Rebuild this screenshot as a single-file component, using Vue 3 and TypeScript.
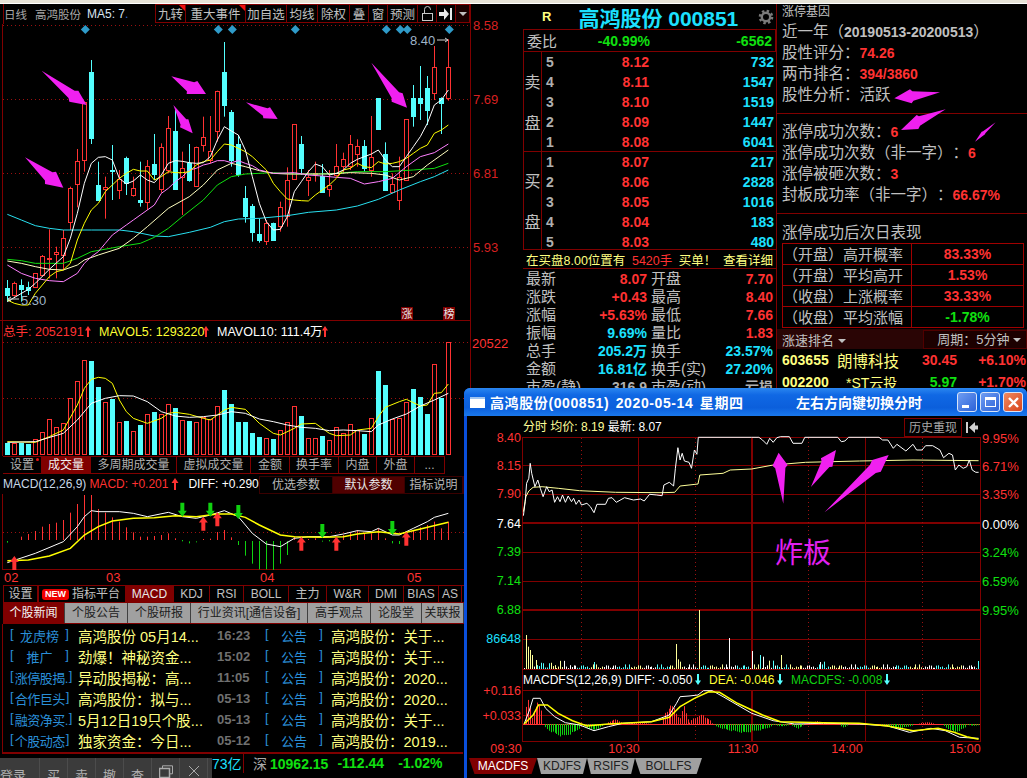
<script setup lang="ts">
type Candle = [number, number, number, number, number]

// kline coords are read at 3x off the daily chart, x comes from the index
const cx = (i: number) => Math.round((22 + 21 * i) / 3)
const line3 = (raw: number[], dy = 0) => {
  const out: string[] = []
  for (let i = 0; i < raw.length; i += 2) out.push(`${raw[i] / 3},${raw[i + 1] / 3 + dy}`)
  return out.join(' ')
}

// arrow is [tail, barb, tip, barb]; adds the two notches where the shaft meets the head
const withNotches = (p: number[]) => {
  const [tx, ty, ax, ay, hx, hy, bx, by] = p
  const mx = (ax + bx) / 2
  const my = (ay + by) / 2
  const notch = (x: number, y: number) => [
    x + (mx - x) * 0.32 + (tx - mx) * 0.07,
    y + (my - y) * 0.32 + (ty - my) * 0.07,
  ]
  return [tx, ty, ...notch(ax, ay), ax, ay, hx, hy, bx, by, ...notch(bx, by)]
}

const candleRaw: Candle[] = [
  [840, 865, 885, 905, 0], [845, 848, 885, 890, 1], [838, 855, 868, 905, 0], [845, 862, 870, 885, 0],
  [820, 820, 862, 862, 1], [765, 768, 825, 830, 1], [688, 775, 778, 835, 1], [740, 757, 763, 835, 1],
  [690, 715, 765, 810, 1], [560, 565, 668, 690, 1], [447, 482, 550, 622, 1], [305, 305, 478, 515, 1],
  [180, 217, 416, 432, 0], [485, 555, 600, 600, 0], [530, 560, 566, 656, 1], [435, 510, 512, 600, 0],
  [510, 538, 572, 597, 1], [470, 473, 547, 585, 0], [530, 565, 587, 590, 1], [485, 601, 606, 620, 0],
  [480, 497, 605, 630, 1], [402, 492, 522, 540, 0], [430, 442, 567, 578, 1], [348, 385, 510, 520, 1],
  [330, 393, 567, 567, 0], [455, 503, 530, 645, 1], [432, 488, 540, 545, 0], [440, 440, 557, 557, 1],
  [350, 410, 433, 455, 1], [348, 452, 480, 490, 1], [272, 274, 395, 425, 1], [126, 217, 315, 350, 0],
  [330, 337, 480, 500, 0], [405, 432, 522, 530, 0], [558, 595, 650, 668, 0], [612, 618, 695, 725, 0],
  [655, 702, 720, 728, 0], [660, 668, 722, 735, 1], [668, 670, 720, 722, 0], [605, 622, 678, 695, 1],
  [502, 540, 648, 680, 1], [373, 373, 538, 540, 1], [408, 433, 506, 525, 0], [510, 531, 541, 588, 1],
  [485, 520, 524, 545, 1], [492, 527, 575, 575, 0], [510, 556, 568, 590, 1], [432, 498, 525, 530, 1],
  [458, 478, 500, 520, 1], [405, 432, 497, 510, 1], [418, 438, 463, 500, 1], [420, 438, 503, 515, 0],
  [348, 472, 510, 530, 1], [295, 295, 387, 390, 0], [427, 462, 570, 570, 0], [520, 552, 575, 580, 1],
  [470, 530, 598, 630, 1], [358, 358, 540, 542, 1], [255, 295, 350, 380, 0], [198, 295, 311, 360, 0],
  [228, 265, 330, 375, 0], [138, 202, 280, 300, 1], [292, 294, 308, 402, 0], [118, 200, 292, 302, 1],
]
const candles = candleRaw.map((c, i) => ({
  x: cx(i),
  wt: c[0] / 3,
  top: Math.round(c[1] / 3),
  h: Math.max(1, Math.round((c[2] - c[1]) / 3)),
  wb: c[3] / 3,
  red: c[4] === 1,
}))

const maLines = [
  { color: '#28e0f0', pts: [22,643,64,660,106,677,148,685,190,690,274,690,358,690,400,695,463,708,505,710,568,697,631,682,673,665,715,657,778,655,862,647,925,637,1009,630,1072,618,1135,598,1198,570,1261,545,1303,530,1345,510] },
  { color: '#10e010', pts: [22,778,64,782,106,790,190,790,232,775,274,755,358,740,421,730,463,712,505,685,547,650,610,600,652,555,694,530,736,522,820,518,883,522,946,522,1009,520,1072,515,1156,515,1240,510,1303,505,1345,490] },
  { color: '#ffffc0', pts: [22,783,64,790,106,800,148,808,190,810,232,795,253,780,295,765,358,745,400,715,442,680,505,625,568,590,610,555,652,510,694,490,736,500,778,512,820,520,862,522,925,522,988,522,1051,518,1114,520,1156,525,1198,540,1240,530,1282,495,1345,450] },
  { color: '#ff80ff', pts: [22,795,64,820,106,835,148,842,190,845,232,820,253,790,274,770,295,755,316,730,337,705,358,690,379,675,400,660,442,630,463,615,484,580,505,565,526,545,547,530,568,510,589,505,610,495,631,490,652,482,673,482,694,488,715,482,736,490,757,497,778,510,799,515,820,520,883,518,925,525,967,528,1009,532,1051,535,1093,552,1135,545,1177,535,1219,500,1261,470,1303,458,1345,432] },
  { color: '#ffff00', pts: [22,900,43,910,64,915,85,915,106,880,127,855,148,830,169,815,190,810,211,790,232,720,253,670,274,630,295,610,316,575,337,555,358,535,379,520,400,508,421,513,442,513,463,540,484,530,505,515,526,518,547,518,568,515,589,495,610,485,631,480,652,455,673,432,694,435,715,445,736,455,757,470,778,490,799,510,820,550,841,575,862,597,883,600,904,602,925,603,946,585,967,570,988,555,1009,535,1030,510,1051,505,1072,490,1093,500,1114,503,1135,485,1156,492,1177,490,1198,485,1219,475,1240,460,1261,445,1282,435,1303,400,1324,390,1345,375] },
  { color: '#ffffff', pts: [22,905,85,868,106,850,148,808,190,770,211,715,232,640,253,550,274,490,295,472,316,470,337,480,358,535,379,552,400,543,421,525,442,540,463,548,484,525,505,490,526,482,547,484,568,488,589,490,610,488,631,470,652,420,673,380,694,393,715,405,736,450,757,530,778,610,799,665,820,690,841,688,862,650,883,575,904,545,925,515,946,492,967,500,988,525,1009,520,1030,510,1051,490,1072,478,1093,470,1114,462,1135,450,1156,480,1177,500,1198,500,1219,470,1240,440,1261,410,1282,370,1303,315,1324,300,1345,270] },
]

const klineArrows = [
  [75,472,168,515,190,563,135,552],
  [125,212,235,272,260,315,208,305],
  [514,229,592,243,618,282,560,282],
  [520,315,565,358,578,400,540,382],
  [738,307,810,322,833,357,790,355],
  [1114,188,1208,280,1221,323,1175,305],
].map((a) => line3(withNotches(a)))
const diamonds = [256, 655, 697, 886, 1159, 1201, 1222, 1348]

const volTops = [370,370,368,372,358,335,298,320,308,235,183,121,123,202,247,237,307,303,333,315,283,276,282,253,265,300,303,307,290,298,258,210,252,306,306,339,351,355,357,331,307,259,288,355,355,348,360,320,340,313,330,342,295,153,195,297,295,247,207,231,282,133,233,67]
const volBars = volTops.map((t, i) => {
  const top = Math.round(t / 3 + 320)
  return { x: cx(i), top, h: 454 - top, red: candleRaw[i][4] === 1 }
})
const volYellow = [22,365,106,367,148,350,190,330,232,255,253,205,274,178,295,172,316,175,337,190,358,240,379,275,400,295,442,310,484,295,505,280,526,277,568,283,610,295,631,300,673,270,694,262,736,268,778,310,820,340,841,345,883,325,904,312,946,310,988,340,1009,347,1051,345,1072,330,1114,325,1135,290,1156,262,1198,245,1219,238,1261,258,1282,255,1303,220,1324,218,1345,192]
const volWhite = [22,367,106,365,190,340,232,300,274,250,316,235,358,227,400,228,442,245,484,275,526,288,568,292,610,290,652,285,694,275,736,280,778,297,820,305,862,315,904,322,946,325,988,332,1030,330,1072,332,1114,335,1135,315,1177,297,1219,282,1261,258,1303,240,1345,220]

// histogram ends: top, bottom (3x, relative to the crop at y=320)
const macdHist: [number, number, number][] = [
  [22,663,668],[64,650,660],[85,642,660],[106,633,660],[127,620,660],[148,612,660],[169,608,660],[190,600,660],[211,578,660],[232,552,660],[253,525,660],[274,525,660],[295,567,660],[316,578,660],[337,592,660],[358,605,660],[379,622,660],[400,637,660],[421,650,660],[442,650,660],[463,648,660],[484,645,660],[505,640,660],[526,655,660],[547,660,664],[568,664,670],[589,664,667],[610,657,660],[631,656,660],[652,636,660],[673,630,660],[694,652,660],[715,663,675],[736,663,707],[757,663,731],[778,663,748],[799,663,748],[820,663,750],[841,663,731],[862,663,705],[883,650,660],[904,650,660],[925,657,660],[946,655,660],[967,662,665],[988,660,664],[1009,655,660],[1030,645,660],[1051,638,660],[1072,630,660],[1093,640,660],[1114,640,660],[1135,625,660],[1156,655,660],[1177,663,670],[1198,663,672],[1219,640,660],[1240,633,660],[1261,622,660],[1282,615,660],[1303,605,660],[1324,625,660],[1345,605,660],
]
const macdBars = macdHist.map(([x, a, b]) => ({
  x: Math.round(x / 3) + 0.5,
  y1: a / 3 + 320,
  y2: b / 3 + 320,
  green: a >= 660,
}))
const macdWhite = [22,728,106,700,190,665,232,620,253,590,274,572,295,575,358,575,400,580,442,590,505,577,547,590,589,595,631,585,673,572,715,590,757,640,799,672,841,680,883,655,925,650,988,650,1030,642,1072,632,1114,635,1135,625,1177,645,1198,645,1240,625,1282,605,1303,592,1345,580]
const macdYellow = [22,722,85,720,148,708,211,685,253,645,295,620,337,603,400,595,463,593,526,587,589,590,652,582,694,582,736,592,778,615,841,645,883,650,967,652,1030,650,1072,642,1135,635,1198,642,1261,627,1345,607]

const arrowUp = (x: number, y: number, w: number, h: number, shaft: number) => {
  const hw = w / 2
  const sw = shaft / 2
  const hh = h * 0.42
  return `M${x} ${y}L${x + hw} ${y + hh}H${x + sw}V${y + h}H${x - sw}V${y + hh}H${x - hw}Z`
}
const arrowDown = (x: number, y: number, w: number, h: number, shaft: number) => {
  const hw = w / 2
  const sw = shaft / 2
  const hh = h * 0.42
  return `M${x} ${y + h}L${x + hw} ${y + h - hh}H${x + sw}V${y}H${x - sw}V${y + h - hh}H${x - hw}Z`
}
const macdUps = [[43, 708], [610, 590], [652, 577], [904, 650], [1009, 650], [1219, 635]].map(
  ([x, y]) => arrowUp(x / 3, y / 3 + 320, 9, 14, 4),
)
const macdDowns = [[547, 548], [631, 548], [715, 555], [967, 612], [1177, 603]].map(
  ([x, y]) => arrowDown(x / 3, y / 3 + 320, 9, 14, 4),
)

const indicatorTabs = ['设置', '成交量', '多周期成交量', '虚拟成交量', '金额', '换手率', '内盘', '外盘', '...']
const topTabs = ['MACD', 'KDJ', 'RSI', 'BOLL', '主力', 'W&R', 'DMI', 'BIAS', 'AS']
const newsTabs = ['个股新闻', '个股公告', '个股研报', '行业资讯[通信设备]', '高手观点', '论股堂', '关联报']
const news = [
  { tag: '龙虎榜', wide: false, title: '高鸿股份 05月14...', time: '16:23', other: '高鸿股份：关于...' },
  { tag: '推广', wide: false, title: '劲爆！神秘资金...', time: '15:02', other: '高鸿股份：关于...' },
  { tag: '涨停股揭.', wide: true, title: '异动股揭秘：高...', time: '11:05', other: '高鸿股份：2020...' },
  { tag: '合作巨头', wide: true, title: '高鸿股份：拟与...', time: '05-13', other: '高鸿股份：2020...' },
  { tag: '融资净买.', wide: true, title: '5月12日19只个股...', time: '05-13', other: '高鸿股份：关于...' },
  { tag: '个股动态', wide: true, title: '独家资金：今日...', time: '05-12', other: '高鸿股份：2019...' },
]
const taskItems = ['买', '卖', '撤', '查']

const sells = [['5', '8.12', '732'], ['4', '8.11', '1547'], ['3', '8.10', '1519'], ['2', '8.09', '1447'], ['1', '8.08', '6041']]
const buys = [['1', '8.07', '217'], ['2', '8.06', '2828'], ['3', '8.05', '1016'], ['4', '8.04', '183'], ['5', '8.03', '480']]
const stats = [
  ['最新', '8.07', 'red', '开盘', '7.70', 'red'],
  ['涨跌', '+0.43', 'red', '最高', '8.40', 'red'],
  ['涨幅', '+5.63%', 'red', '最低', '7.66', 'red'],
  ['振幅', '9.69%', 'cyan', '量比', '1.83', 'red'],
  ['总手', '205.2万', 'cyan', '换手', '23.57%', 'cyan'],
  ['金额', '16.81亿', 'cyan', '换手(实)', '27.20%', 'cyan'],
  ['市盈(静)', '316.9', 'grey', '市盈(动)', '亏损', 'grey'],
]
const perf = [
  ['（开盘）高开概率', '83.33%', 'red'],
  ['（开盘）平均高开', '1.53%', 'red'],
  ['（收盘）上涨概率', '33.33%', 'red'],
  ['（收盘）平均涨幅', '-1.78%', 'green'],
]
const rightArrows = [
  [495,277,405,268,358,295,410,310],
  [512,328,425,345,378,390,430,387],
  [662,367,620,395,600,425,630,403],
].map((a) => line3(withNotches(a)))

// intraday window: crop coords are 2.79x across and 3x down
const wx = (v: number) => 465 + v / 2.79
const w6 = (raw: number[]) => {
  const out: string[] = []
  for (let i = 0; i < raw.length; i += 2) out.push(`${wx(raw[i]).toFixed(1)},${(385 + raw[i + 1] / 3).toFixed(1)}`)
  return out.join(' ')
}
const w7 = (raw: number[]) => {
  const out: string[] = []
  for (let i = 0; i < raw.length; i += 2) out.push(`${wx(raw[i]).toFixed(1)},${(600 + raw[i + 1] / 3).toFixed(1)}`)
  return out.join(' ')
}
const priceLine = [163,392,168,350,172,295,178,280,182,235,186,265,195,305,203,285,210,310,218,335,228,305,235,320,243,315,250,352,258,335,265,350,272,330,280,352,288,333,297,350,303,340,310,358,318,345,325,360,340,355,350,365,360,383,368,358,392,358,400,340,410,338,422,352,445,338,470,345,490,342,500,348,515,328,535,330,550,332,555,300,570,292,582,303,587,250,594,188,600,225,606,205,612,228,625,232,632,250,640,195,647,208,651,157,800,157,820,157,830,165,842,178,850,160,860,172,870,158,880,155,905,155,915,175,940,175,948,157,1040,157,1050,170,1060,168,1070,157,1155,157,1165,165,1180,165,1195,190,1205,178,1230,198,1250,178,1260,195,1275,195,1285,182,1305,182,1325,195,1335,218,1350,205,1360,210,1368,255,1378,240,1390,250,1400,245,1407,225,1415,255,1425,262,1433,262]
const avgLine = [163,380,170,335,178,318,190,307,215,305,260,310,320,317,420,322,550,323,585,322,600,303,650,297,655,270,720,265,740,255,800,252,860,240,950,232,1100,228,1250,225,1433,227]
const windowArrows = [
  [888,356,858,242,875,203,900,240],
  [965,306,993,220,1035,195,1025,245],
  [1003,382,1136,225,1182,210,1160,260],
].map((a) => w6(withNotches(a)))
const gridH = [
  { y: 437.5, w: 1 }, { y: 465.5, w: 1 }, { y: 494.5, w: 1 }, { y: 523, w: 2 }, { y: 552.5, w: 1 },
  { y: 581.5, w: 1 }, { y: 610, w: 2 }, { y: 639.5, w: 1 }, { y: 669.5, w: 1 }, { y: 690.5, w: 1 },
  { y: 715.5, w: 1 }, { y: 741.5, w: 1 },
]
const gridV = [{ x: 638.5, w: 1 }, { x: 752, w: 2 }, { x: 865.5, w: 1 }, { x: 980.5, w: 1 }]
const gridDot = [581.5, 695.5, 808.5, 922.5]
const leftLabels = [
  ['8.40', 438, 'red'], ['8.15', 466, 'red'], ['7.90', 494, 'red'], ['7.64', 524, 'white'],
  ['7.39', 552, 'green'], ['7.14', 581, 'green'], ['6.88', 610, 'green'],
  ['86648', 639, 'cyan'], ['+0.116', 691, 'red'], ['+0.033', 716, 'red'],
] as const
const rightLabels = [
  ['9.95%', 438, 'red'], ['6.71%', 466, 'red'], ['3.35%', 494, 'red'], ['0.00%', 524, 'white'],
  ['3.24%', 552, 'green'], ['6.59%', 581, 'green'], ['9.95%', 610, 'green'],
] as const
const timeLabels = [['09:30', 506], ['10:30', 624], ['11:30', 743], ['14:00', 847], ['15:00', 965]] as const

const spikes: Record<number, [number, string]> = {
  1: [105, '#ffff99'], 2: [140, '#ffff99'], 3: [150, '#ffff99'], 4: [165, '#ffff99'], 6: [180, '#ffff99'],
  37: [186, '#54ffff'], 80: [132, '#ffff99'], 81: [178, '#ffff99'], 82: [185, '#ffff99'], 92: [30, '#ffff99'],
  108: [114, '#ffffff'], 120: [153, '#ffffff'], 124: [165, '#54ffff'], 126: [170, '#ffffff'], 129: [182, '#ffff99'],
  131: [182, '#54ffff'], 135: [165, '#ffff99'], 156: [186, '#ffffff'], 158: [185, '#54ffff'], 239: [183, '#54ffff'],
}
const volColors = ['#ffffff', '#ffff99', '#54ffff']
const tickVol = Array.from({ length: 240 }, (_, i) => {
  const x = Math.round(wx(165 + i * 5.3)) + 0.5
  const spike = spikes[i]
  const base = 207 - ((i * i * 13 + i * 7) % 17) / (i < 25 ? 0.7 : 1.4) - 3
  return {
    x,
    top: 600 + (spike ? spike[0] : base) / 3,
    color: spike ? spike[1] : volColors[(i * 5 + (i % 7)) % 3],
  }
})
const histSegs: [number, number, number, string][] = [
  [165, 185, 290, 'r'], [185, 218, 300, 'r'], [220, 325, 412, 'g'], [330, 385, 392, 'g'], [395, 440, 357, 'r'],
  [440, 520, 368, 'r'], [550, 598, 310, 'r'], [598, 622, 318, 'r'], [625, 690, 343, 'r'], [695, 860, 400, 'g'],
  [862, 905, 380, 'g'], [910, 945, 386, 'g'], [955, 1012, 363, 'r'], [1045, 1068, 383, 'g'], [1160, 1250, 386, 'g'],
  [1265, 1310, 366, 'r'], [1335, 1400, 398, 'g'], [1400, 1437, 378, 'g'],
]
const tickHist = Array.from({ length: 240 }, (_, i) => {
  const zx = 165 + i * 5.3
  const seg = histSegs.find((s) => zx >= s[0] && zx < s[1])
  if (!seg) return null
  const t = 1 - Math.abs((2 * (zx - seg[0])) / (seg[1] - seg[0]) - 1)
  const jitter = 0.82 + ((i * 11) % 5) * 0.045
  return {
    x: Math.round(wx(zx)) + 0.5,
    y: 600 + (373 + (seg[2] - 373) * Math.sqrt(t) * jitter) / 3,
    green: seg[3] === 'g',
  }
}).filter((b) => b !== null)
const fsWhite = [165,372,180,330,190,295,210,295,225,325,250,350,280,368,320,375,360,392,400,380,440,370,520,365,570,345,590,310,600,290,625,288,650,285,665,272,690,272,720,290,800,340,860,362,920,372,1000,370,1100,372,1180,378,1240,397,1300,385,1340,392,1380,412,1433,415]
const fsYellow = [165,372,190,345,205,315,230,315,260,340,300,362,340,378,400,372,520,365,570,352,600,320,640,295,680,275,710,277,760,310,830,345,880,365,1000,368,1100,370,1180,378,1250,392,1320,385,1365,397,1400,410,1433,418]
const fsTabs = ['MACDFS', 'KDJFS', 'RSIFS', 'BOLLFS']
</script>

<template>
  <div class="screen">
    <div class="top-strip"></div>
    <div class="main">
      <!-- left: daily chart, volume, macd, news -->
      <section class="left">
        <div class="kline-head">
          <div class="kline-title">
            <span>日线</span><span class="name">高鸿股份</span><span class="ma5">MA5: 7<i>.</i></span>
          </div>
          <div class="tools">
            <span class="flag">九转</span>
            <span class="flag">重大事件</span>
            <span>加自选</span>
            <span>均线</span>
            <span>除权</span>
            <span>叠</span>
            <span>窗</span>
            <span>预测</span>
            <span>
              <svg width="13" height="15" viewBox="0 0 13 15">
                <rect x="1.5" y="7.5" width="10" height="7" fill="none" stroke="#c8c8c8" />
                <path d="M3.5 7V3.5a3 3 0 0 1 6 0V4" fill="none" stroke="#c8c8c8" />
              </svg>
            </span>
            <span>
              <svg width="14" height="12" viewBox="0 0 14 12">
                <path d="M0 4h5V0l5 6-5 6V8H0z" fill="#e8e8e8" />
                <rect x="11" y="0" width="2" height="12" fill="#e8e8e8" />
              </svg>
            </span>
            <span class="caret-box"><i class="caret"></i></span>
          </div>
        </div>
        <svg class="pane kline" viewBox="0 24 523 296" width="523" height="296">
          <line x1="2.5" y1="24" x2="2.5" y2="320" class="grid" />
          <line x1="470.5" y1="4" x2="470.5" y2="320" class="grid" />
          <line
            v-for="y in [25.5, 99.5, 173.5, 247.5]"
            :key="y"
            x1="3"
            :y1="y"
            x2="470"
            :y2="y"
            class="dots"
          />
          <text v-for="l in [['8.58', 25], ['7.69', 99], ['6.81', 173], ['5.93', 247]]" :key="l[0]" x="473" :y="l[1]" class="axis-red">{{ l[0] }}</text>
          <path
            v-for="d in diamonds"
            :key="d"
            :d="`M${d / 3} 25l4.500 4.500-4.500 4.500-4.500-4.500z`"
            fill="#2f9bc9"
          />
          <g v-for="c in candles" :key="c.x">
            <line :x1="c.x + 0.5" :y1="c.wt" :x2="c.x + 0.5" :y2="c.wb" :stroke="c.red ? '#ff3232' : '#54ffff'" />
            <rect
              v-if="c.red"
              :x="c.x - 1.5"
              :y="c.top + 0.5"
              width="4"
              :height="c.h"
              fill="#000"
              stroke="#ff3232"
            />
            <rect v-else :x="c.x - 2" :y="c.top" width="5" :height="c.h + 1" fill="#54ffff" />
          </g>
          <polyline v-for="m in maLines" :key="m.color" :points="line3(m.pts)" :stroke="m.color" class="curve" />
          <polygon v-for="(a, i) in klineArrows" :key="i" :points="a" fill="#f020f0" />
          <text x="410" y="40" class="mark">8.40</text>
          <path d="M437 40h11m-3-2l3 2-3 2" fill="none" stroke="#d0d0d0" />
          <path d="M8 299h11m-8-2l-3 2 3 2" fill="none" stroke="#d0d0d0" />
          <text x="21" y="300" class="mark">5.30</text>
          <rect x="401" y="307" width="12" height="13" fill="#800000" />
          <rect x="443" y="307" width="12" height="13" fill="#800000" />
          <text x="407" y="314" class="badge">涨</text>
          <text x="449" y="314" class="badge">榜</text>
        </svg>

        <svg class="pane" viewBox="0 320 523 136" width="523" height="136">
          <line x1="0" y1="320.5" x2="470" y2="320.5" class="grid" />
          <line x1="2.5" y1="320" x2="2.5" y2="456" class="grid" />
          <line x1="470.5" y1="320" x2="470.5" y2="456" class="grid" />
          <line x1="3" y1="342.5" x2="470" y2="342.5" class="dots" />
          <line x1="3" y1="398.5" x2="470" y2="398.5" class="dots" />
          <text x="472" y="343" class="vol-top">20522</text>
          <text x="3" y="332" class="head red">总手: 2052191</text>
          <path :d="arrowUp(88, 326, 6, 11, 2)" fill="#ff3232" />
          <text x="99" y="332" class="head yellow">MAVOL5: 1293220</text>
          <path :d="arrowUp(206, 326, 6, 11, 2)" fill="#ff3232" />
          <text x="217" y="332" class="head white">MAVOL10: 111.4万</text>
          <path :d="arrowUp(325, 326, 6, 11, 2)" fill="#ff3232" />
          <g v-for="b in volBars" :key="b.x">
            <rect v-if="b.red" :x="b.x - 1.5" :y="b.top + 0.5" width="4" :height="b.h" fill="#000" stroke="#ff3232" />
            <rect v-else :x="b.x - 2" :y="b.top" width="5" :height="b.h + 1" fill="#54ffff" />
          </g>
          <polyline :points="line3(volYellow, 320)" stroke="#ffff00" class="curve" />
          <polyline :points="line3(volWhite, 320)" stroke="#ffffff" class="curve" />
        </svg>

        <div class="ind-tabs">
          <span v-for="(t, i) in indicatorTabs" :key="t" :class="{ on: i === 1, dotted: i === 0 }">{{ t }}</span>
        </div>

        <div class="macd-head">
          <div class="macd-title">
            <span class="silver">MACD(12,26,9)</span>
            <span class="red">MACD: +0.201</span>
            <svg width="8" height="12" viewBox="0 0 8 12"><path :d="arrowUp(4, 0, 7, 12, 2)" fill="#ff3232" /></svg>
            <span class="white">DIFF: +0.290</span>
          </div>
          <div class="params">
            <span>优选参数</span><span class="on">默认参数</span><span>指标说明</span>
          </div>
        </div>

        <svg class="pane" viewBox="0 494 523 76" width="523" height="76">
          <line x1="2.5" y1="494" x2="2.5" y2="570" class="grid" />
          <line x1="3" y1="532.5" x2="470" y2="532.5" class="dots" />
          <line x1="3" y1="569.5" x2="470" y2="569.5" class="grid" />
          <line
            v-for="b in macdBars"
            :key="b.x"
            :x1="b.x"
            :y1="b.y1"
            :x2="b.x"
            :y2="b.y2"
            :stroke="b.green ? '#10d010' : '#ff3232'"
          />
          <polyline :points="line3(macdWhite, 320)" stroke="#ffffff" class="curve" />
          <polyline :points="line3(macdYellow, 320)" stroke="#ffff00" class="curve thick" />
          <path v-for="d in macdUps" :key="d" :d="d" fill="#ff3232" />
          <path v-for="d in macdDowns" :key="d" :d="d" fill="#10d010" />
        </svg>

        <div class="months">
          <span>02</span><span>03</span><span>04</span><span>05</span>
        </div>

        <div class="tabs-one">
          <span class="plain">设置</span>
          <span class="plain platform"><b class="new">NEW</b>指标平台</span>
          <span v-for="(t, i) in topTabs" :key="t" :class="{ on: i === 0 }">{{ t }}</span>
        </div>
        <div class="tabs-two">
          <span v-for="(t, i) in newsTabs" :key="t" :class="{ on: i === 0 }">{{ t }}</span>
        </div>

        <div class="news">
          <div v-for="n in news" :key="n.time + n.tag" class="news-row">
            <span class="tag" :class="{ tight: n.wide }"><i>[</i><em>{{ n.tag }}</em><i>]</i></span>
            <span class="news-title">{{ n.title }}</span>
            <span class="news-time">{{ n.time }}</span>
            <span class="tag notice"><i>[</i><em>公告</em><i>]</i></span>
            <span class="news-title">{{ n.other }}</span>
          </div>
        </div>

        <div class="status">
          <span class="cyan-amt">73亿</span>
          <span class="index"><em>深</em>10962.15</span>
          <span class="index">-112.44</span>
          <span class="index">-1.02%</span>
        </div>
      </section>

      <!-- middle: order book and stats -->
      <section class="quote">
        <div class="quote-head">
          <span class="r">R</span>
          <span class="quote-name">高鸿股份 000851</span>
          <svg class="gear" width="16" height="16" viewBox="0 0 16 16">
            <circle cx="8" cy="8" r="6" fill="none" stroke="#7a7a7a" stroke-width="2.6" stroke-dasharray="2.4 2.3" />
            <circle cx="8" cy="8" r="4.2" fill="none" stroke="#7a7a7a" stroke-width="2.4" />
          </svg>
        </div>
        <div class="ratio">
          <span class="cn">委比</span>
          <span class="num green ratio-pct">-40.99%</span>
          <span class="num green">-6562</span>
        </div>
        <div class="book">
          <div class="side-label"><span>卖</span><span>盘</span></div>
          <div class="rows">
            <div v-for="r in sells" :key="r[0]" class="book-row">
              <span class="num grey">{{ r[0] }}</span><span class="num red">{{ r[1] }}</span><span class="num cyan">{{ r[2] }}</span>
            </div>
          </div>
        </div>
        <div class="book buy">
          <div class="side-label"><span>买</span><span>盘</span></div>
          <div class="rows">
            <div v-for="r in buys" :key="r[0]" class="book-row">
              <span class="num grey">{{ r[0] }}</span><span class="num red">{{ r[1] }}</span><span class="num cyan">{{ r[2] }}</span>
            </div>
          </div>
        </div>
        <div class="alert">
          <span>在买盘8.00位置有</span><span class="red">5420手</span><span>买单！</span><span>查看详细</span>
        </div>
        <div class="stats">
          <div v-for="s in stats" :key="s[0]" class="stat-row">
            <span class="cn">{{ s[0] }}</span><span class="num" :class="s[2]">{{ s[1] }}</span>
            <span class="cn">{{ s[3] }}</span><span class="num" :class="s[5]">{{ s[4] }}</span>
          </div>
        </div>
      </section>

      <!-- right: limit-up stats -->
      <section class="gene">
        <div class="gene-title">涨停基因</div>
        <div class="gene-row">近一年（<b class="silver-num">20190513-20200513</b>）</div>
        <div class="gene-row">股性评分：<b class="red">74.26</b></div>
        <div class="gene-row">两市排名：<b class="red">394/3860</b></div>
        <div class="gene-row">股性分析：活跃</div>
        <div class="gene-group">
          <div class="gene-row">涨停成功次数：<b class="red">6</b></div>
          <div class="gene-row">涨停成功次数（非一字）：<b class="red">6</b></div>
          <div class="gene-row">涨停被砸次数：<b class="red">3</b></div>
          <div class="gene-row">封板成功率（非一字）：<b class="red">66.67%</b></div>
        </div>
        <div class="gene-group next">
          <div class="gene-row">涨停成功后次日表现</div>
        </div>
        <table class="perf">
          <tbody>
            <tr v-for="p in perf" :key="p[0]">
              <td class="perf-name">{{ p[0] }}</td>
              <td class="num" :class="p[2]">{{ p[1] }}</td>
            </tr>
          </tbody>
        </table>
        <div class="speed">
          <span class="speed-name">涨速排名 <i class="caret"></i></span>
          <span class="period">周期：5分钟 <i class="caret"></i></span>
        </div>
        <div class="rank">
          <b class="code">603655</b><span class="rank-name">朗博科技</span><b class="red price">30.45</b><b class="red pct">+6.10%</b>
        </div>
        <div class="rank">
          <b class="code">002200</b><span class="rank-name st">*ST云投</span><b class="green price">5.97</b><b class="red pct">+1.70%</b>
        </div>
        <svg class="gene-arrows" viewBox="0 0 252 150" width="252" height="150">
          <polygon v-for="(a, i) in rightArrows" :key="i" :points="a" fill="#f020f0" />
        </svg>
      </section>
    </div>

    <!-- quick trade bar sits above the status row -->
    <div class="taskbar">
      <span class="login">登录</span>
      <span v-for="t in taskItems" :key="t">{{ t }}</span>
      <span>
        <svg width="14" height="14" viewBox="0 0 14 14">
          <rect x="0.5" y="3.5" width="10" height="9" fill="none" stroke="#aaa" stroke-width="1.5" />
          <path d="M3.5 3V0.8h10v8H11" fill="none" stroke="#aaa" />
        </svg>
      </span>
      <span>
        <svg width="12" height="12" viewBox="0 0 12 12"><path d="M1 1l10 10M11 1L1 11" stroke="#aaa" fill="none" /></svg>
      </span>
    </div>

    <!-- floating intraday window -->
    <div class="win">
      <div class="win-title">
        <span class="win-icon"></span>
        <span class="win-name">高鸿股份(000851) 2020-05-14 星期四</span>
        <span class="win-hint">左右方向键切换分时</span>
        <span class="btns">
          <span class="btn"><i class="min"></i></span>
          <span class="btn"><i class="max"></i></span>
          <span class="btn close">
            <svg width="13" height="13" viewBox="0 0 13 13"><path d="M2 2l9 9M11 2l-9 9" stroke="#fff" stroke-width="2.4" fill="none" /></svg>
          </span>
        </span>
      </div>
      <div class="win-body">
        <svg class="win-chart" viewBox="467 416 560 362" width="560" height="362">
          <line v-for="h in gridH" :key="h.y" x1="522" :y1="h.y" x2="981" :y2="h.y" class="grid" :stroke-width="h.w" />
          <line x1="522.5" y1="437" x2="522.5" y2="742" class="grid" />
          <line v-for="v in gridV" :key="v.x" :x1="v.x" y1="437" :x2="v.x" y2="742" class="grid" :stroke-width="v.w" />
          <line v-for="x in gridDot" :key="x" :x1="x" y1="438" :x2="x" y2="741" class="dots" />
          <rect x="523" y="670" width="457" height="20" fill="#000" />

          <text x="523" y="427" class="win-head">
            <tspan fill="#ffff99">分时 均价:</tspan>
            <tspan fill="#ffff99"> 8.19</tspan>
            <tspan fill="#fff"> 最新:</tspan>
            <tspan fill="#fff"> 8.07</tspan>
          </text>
          <rect x="904.5" y="418.5" width="57" height="18" fill="#000" class="grid" />
          <text x="933" y="428" class="replay">历史重现</text>
          <path d="M966 422h2v11h-2zM969 427.5l6-5.500v3.500h3v4h-3v3.500z" fill="#d0d0d0" />

          <polyline :points="w6(avgLine)" stroke="#ffff99" class="curve" />
          <polyline :points="w6(priceLine)" stroke="#ffffff" class="curve" />
          <polygon v-for="(a, i) in windowArrows" :key="i" :points="a" fill="#f020f0" />
          <text x="803" y="553" class="blast">炸板</text>

          <line v-for="b in tickVol" :key="b.x" :x1="b.x" :y1="b.top" :x2="b.x" y2="669" :stroke="b.color" />
          <line x1="523" y1="724.5" x2="980" y2="724.5" stroke="#ff3232" />
          <line
            v-for="b in tickHist"
            :key="b.x"
            :x1="b.x"
            y1="724"
            :x2="b.x"
            :y2="b.y"
            :stroke="b.green ? '#10d010' : '#ff3232'"
          />
          <polyline :points="w7(fsWhite)" stroke="#ffffff" class="curve" />
          <polyline :points="w7(fsYellow)" stroke="#ffff00" class="curve thick" />

          <text v-for="l in leftLabels" :key="l[0]" x="521" :y="l[1]" class="win-left" :class="l[2]">{{ l[0] }}</text>
          <text v-for="l in rightLabels" :key="l[1]" x="982" :y="l[1]" class="win-right" :class="l[2]">{{ l[0] }}</text>
          <text v-for="l in timeLabels" :key="l[0]" :x="l[1]" y="749" class="win-time">{{ l[0] }}</text>

          <text x="523" y="680" class="fs-head" fill="#fff">MACDFS(12,26,9) DIFF: -0.050</text>
          <path :d="arrowDown(698, 674, 6, 11, 2)" fill="#54ffff" />
          <text x="709" y="680" class="fs-head" fill="#ffff33">DEA: -0.046</text>
          <path :d="arrowDown(780, 674, 6, 11, 2)" fill="#54ffff" />
          <text x="791" y="680" class="fs-head" fill="#10d010">MACDFS: -0.008</text>
          <path :d="arrowDown(887, 674, 6, 11, 2)" fill="#54ffff" />
        </svg>
        <div class="fs-tabs">
          <span v-for="(t, i) in fsTabs" :key="t" :class="{ on: i === 0 }">{{ t }}</span>
        </div>
      </div>
    </div>
  </div>
</template>

<style>
html,
body {
  margin: 0;
  background: #000;
}
</style>

<style scoped>
.screen {
  position: relative;
  width: 1027px;
  height: 778px;
  overflow: hidden;
  background: #000;
  color: #c0c0c0;
  font-family: 'Liberation Sans', 'Noto Sans CJK SC', sans-serif;
  font-size: 13px;
  text-spacing-trim: space-all;
}

i,
em {
  font-style: normal;
}

.red {
  color: #ff3232;
  fill: #ff3232;
}

.green {
  color: #10e010;
  fill: #10e010;
}

.cyan {
  color: #1ce0ff;
  fill: #1ce0ff;
}

.white {
  color: #fff;
  fill: #fff;
}

.yellow {
  color: #ffff33;
  fill: #ffff33;
}

.grey {
  color: #b0b0b0;
}

.silver {
  color: #c8d8e8;
}

.top-strip {
  height: 4px;
  background: #e6e2d6;
  border-bottom: 1px solid #fff;
  box-sizing: border-box;
}

.main {
  display: flex;
  height: 774px;
}

.left {
  display: flex;
  flex-direction: column;
  width: 523px;
  flex: none;
}

.pane {
  display: block;
  flex: none;
  overflow: visible;
}

.grid {
  stroke: #800000;
}

.dots {
  stroke: #9a1010;
  stroke-dasharray: 1 3;
}

.curve {
  fill: none;
  stroke-width: 1;
}

.thick {
  stroke-width: 1.5;
}

.axis-red {
  fill: #d82020;
  font-size: 13px;
  dominant-baseline: central;
}

.mark {
  fill: #9fb4c8;
  font-size: 13px;
  dominant-baseline: central;
}

.badge {
  fill: #e8e8e8;
  font-size: 11px;
  text-anchor: middle;
  dominant-baseline: central;
}

.vol-top {
  fill: #ff3232;
  font-size: 13px;
  dominant-baseline: central;
}

.head {
  font-size: 12.5px;
  dominant-baseline: central;
}

/* daily chart header */
.kline-head {
  display: flex;
  height: 20px;
  justify-content: space-between;
  padding-left: 3px;
  width: 470px;
  box-sizing: border-box;
  flex: none;
}

.kline-title {
  display: flex;
  align-items: center;
  gap: 8px;
  border-left: 1px solid #800000;
  font-size: 11.5px;
  color: #a8a8a8;
}

.ma5 {
  color: #d8e4f0;
  font-size: 12px;
  margin-left: -2px;
}

.ma5 i {
  color: #2f6fd0;
}

.tools {
  display: grid;
  grid-template-columns: 30px 60px 41px 31px 32px 19px 19px 30px 19px 19px 13px;
  border: 1px solid #800000;
  height: 19px;
  box-sizing: border-box;
  font-size: 12.5px;
  color: #c0c0c0;
}

.tools > span {
  display: flex;
  align-items: center;
  justify-content: center;
  border-right: 1px solid #800000;
  position: relative;
  white-space: nowrap;
  overflow: hidden;
}

.tools > span:last-child {
  border-right: 0;
}

.flag::after {
  content: '';
  position: absolute;
  top: 0;
  right: 0;
  border-top: 6px solid #f01010;
  border-left: 6px solid transparent;
}

.caret-box {
  background: #1a0000;
}

.caret {
  display: inline-block;
  border-top: 4px solid #c0c0c0;
  border-left: 4px solid transparent;
  border-right: 4px solid transparent;
  vertical-align: middle;
}

/* indicator tabs */
.ind-tabs {
  display: grid;
  grid-template-columns: 39px 49px 86px 74px 39px 49px 38px 38px 30px;
  width: 442px;
  height: 18px;
  margin-left: 3px;
  border-top: 1px solid #800000;
  border-bottom: 1px solid #800000;
  box-sizing: border-box;
  font-size: 12px;
  flex: none;
  line-height: 16px;
  text-align: center;
}

.ind-tabs span {
  border-right: 1px solid #800000;
  color: #b0b0b0;
  position: relative;
  white-space: nowrap;
}

.ind-tabs .on {
  background: #800000;
  color: #f0f0f0;
}

.ind-tabs .dotted::after {
  content: '';
  position: absolute;
  top: 1px;
  right: 2px;
  width: 3px;
  height: 3px;
  border-radius: 50%;
  background: #f01010;
}

/* macd header */
.macd-head {
  display: flex;
  justify-content: space-between;
  height: 20px;
  width: 464px;
  flex: none;
}

.macd-title {
  display: flex;
  align-items: center;
  gap: 3px;
  padding-left: 3px;
  font-size: 12px;
  white-space: nowrap;
  width: 258px;
}

.macd-title .white {
  margin-left: 6px;
}

.params {
  display: grid;
  grid-template-columns: 73px 72px 58px;
  height: 18px;
  margin-top: 2px;
  border: 1px solid #3a0000;
  box-sizing: border-box;
  font-size: 12px;
  line-height: 16px;
  text-align: center;
  color: #b8b8b8;
}

.params span {
  border-right: 1px solid #3a0000;
  white-space: nowrap;
  overflow: hidden;
}

.params .on {
  background: #500000;
  color: #e8e8e8;
}

/* month axis */
.months {
  display: grid;
  grid-template-columns: 102px 154px 147px 60px;
  height: 15px;
  padding-left: 4px;
  width: 464px;
  box-sizing: border-box;
  flex: none;
  color: #ff3232;
  font-size: 13px;
  line-height: 16px;
}

/* news tabs */
.tabs-one {
  display: grid;
  grid-template-columns: 35px 88px 48px 36px 34px 45px 38px 42px 35px 35px 23px;
  width: 461px;
  height: 16px;
  margin-left: 3px;
  flex: none;
  font-size: 12px;
  line-height: 16px;
  text-align: center;
  color: #c0c0c0;
  overflow: hidden;
  border-top: 1px solid #800000;
  box-sizing: content-box;
}

.tabs-one span {
  border-right: 1px solid #800000;
  white-space: nowrap;
  overflow: hidden;
}

.tabs-one .plain {
  border-left: 1px solid #800000;
}

.tabs-one .on {
  background: #800000;
  color: #e8e8e8;
}

.platform {
  display: flex;
  align-items: center;
  gap: 3px;
  padding-left: 3px;
  background: #000;
}

.new {
  background: #f00000;
  color: #fff;
  font-size: 9px;
  line-height: 11px;
  border-radius: 3px;
  padding: 0 3px;
}

.tabs-two {
  display: grid;
  grid-template-columns: 62px 63px 63px 117px 63px 51px 42px;
  width: 461px;
  height: 22px;
  margin-left: 3px;
  flex: none;
  font-size: 12px;
  line-height: 20px;
  text-align: center;
  background: #800000;
  box-sizing: border-box;
  padding-top: 1px;
  border-bottom: 1px solid #800000;
}

.tabs-two span {
  background: #a0a0a0;
  color: #202020;
  border-right: 1px solid #404040;
  white-space: nowrap;
  overflow: hidden;
}

.tabs-two .on {
  background: #800000;
  color: #f4f4f4;
}

/* news list */
.news {
  flex: none;
  width: 461px;
  margin-left: 2px;
  height: 130px;
  padding-top: 1px;
  box-sizing: border-box;
  border-left: 1px solid #800000;
  border-bottom: 2px solid #800000;
}

.news-row {
  display: grid;
  grid-template-columns: 62px 137px 50px 73px 1fr;
  align-items: center;
  height: 21px;
  padding-left: 6px;
  white-space: nowrap;
}

.tag {
  display: flex;
  justify-content: space-between;
  color: #2a8fd8;
  font-size: 13px;
  width: 61px;
}

.tag i {
  padding: 0 1px;
}

.tag.tight em {
  letter-spacing: -0.5px;
}

.notice {
  margin-left: 6px;
  width: 60px;
}

.news-title {
  color: #ffff80;
  font-size: 14.5px;
  overflow: hidden;
}

.news-row > .news-title:nth-child(2) {
  padding-left: 7px;
}

.news-time {
  color: #707070;
  font-size: 13px;
  font-weight: 700;
  padding-left: 9px;
}

.status {
  display: flex;
  align-items: center;
  gap: 9px;
  height: 18px;
  flex: none;
  padding-left: 212px;
  font-size: 14px;
  font-weight: 700;
  color: #10e010;
  white-space: nowrap;
}

.cyan-amt {
  color: #1ce0ff;
  width: 31px;
  border-right: 1px solid #800000;
  font-weight: 400;
}

.index em {
  color: #aaa;
  font-weight: 400;
  padding-right: 3px;
}

.index:last-child {
  margin-left: 5px;
}

.taskbar {
  position: absolute;
  left: 0;
  top: 758px;
  display: grid;
  grid-template-columns: 40px repeat(6, 28px);
  width: 212px;
  height: 20px;
  overflow: hidden;
  background: #3b3b3b;
  color: #b0b0b0;
  font-size: 13px;
}

.taskbar span {
  display: flex;
  justify-content: center;
  padding-top: 7px;
  border-right: 1px solid #4c4c4c;
}

.taskbar .login {
  justify-content: flex-start;
}

/* quote panel */
.quote {
  width: 254px;
  flex: none;
  display: flex;
  flex-direction: column;
  overflow: hidden;
  height: 384px;
  border-right: 1px solid #800000;
  box-sizing: border-box;
  font-size: 15px;
}

.quote-head {
  position: relative;
  display: flex;
  align-items: center;
  height: 25px;
  flex: none;
}

.r {
  margin-left: 19px;
  color: #ffff80;
  font-weight: 700;
  font-size: 13px;
}

.quote-name {
  margin-left: 27px;
  color: #1ce0ff;
  font-size: 21px;
  font-weight: 700;
  white-space: nowrap;
}

.gear {
  position: absolute;
  left: 235px;
  top: 5px;
}

.num {
  font-size: 14px;
  font-weight: 700;
  white-space: nowrap;
}

.ratio {
  display: grid;
  grid-template-columns: 40px 83px 1fr;
  align-items: center;
  height: 23px;
  flex: none;
  padding: 0 3px;
  border: 1px solid #800000;
  box-sizing: border-box;
}

.ratio .num {
  text-align: right;
}

.book {
  display: flex;
  height: 100px;
  flex: none;
  border-left: 1px solid #800000;
  border-bottom: 1px solid #800000;
  box-sizing: border-box;
}

.book.buy {
  height: 98px;
}

.side-label {
  display: flex;
  flex-direction: column;
  justify-content: center;
  align-items: center;
  gap: 17px;
  width: 17px;
  flex: none;
  border-right: 1px solid #800000;
  font-size: 16px;
}

.rows {
  flex: 1;
  min-width: 0;
}

.book-row {
  display: grid;
  grid-template-columns: 28px 75px 1fr;
  height: 20px;
  line-height: 20px;
  padding: 0 2px 0 4px;
}

.book-row .num {
  text-align: right;
}

.book-row .num:first-child {
  text-align: left;
}

.alert {
  display: flex;
  align-items: center;
  height: 19px;
  flex: none;
  padding: 0 3px;
  font-size: 12.5px;
  color: #ffff80;
  justify-content: space-between;
  border-bottom: 1px solid #800000;
  box-sizing: border-box;
  white-space: nowrap;
}

.stats {
  padding-top: 1px;
  flex: none;
}

.stat-row {
  display: grid;
  grid-template-columns: 60px 61px 60px 1fr;
  height: 18px;
  line-height: 18px;
  padding: 0 3px;
}

.stat-row .num {
  text-align: right;
}

.stat-row .cn {
  white-space: nowrap;
}

.stat-row .cn:nth-child(3) {
  padding-left: 4px;
}

/* limit-up panel */
.gene {
  position: relative;
  width: 250px;
  flex: none;
  box-sizing: border-box;
  padding-left: 5px;
  font-size: 15.5px;
  overflow: hidden;
  height: 384px;
}

.gene-title {
  height: 17px;
  line-height: 17px;
  font-size: 12px;
}

.gene-row {
  height: 21px;
  line-height: 21px;
  white-space: nowrap;
}

.gene-row b {
  font-size: 14px;
}

.silver-num {
  color: #c0c0c0;
}

.gene-group {
  margin: 8px 0 0 -5px;
  padding: 7px 0 0 5px;
  border-top: 1px solid #800000;
}

.gene-group.next {
  padding-top: 8px;
}

.perf {
  width: 242px;
  border-collapse: collapse;
  table-layout: fixed;
  font-size: 15px;
}

.perf td {
  height: 20px;
  padding: 0;
  border: 1px solid #a00000;
  text-align: center;
  white-space: nowrap;
  overflow: hidden;
  line-height: 19px;
}

.perf-name {
  width: 128px;
  text-align: left !important;
}

.speed {
  display: flex;
  justify-content: space-between;
  align-items: center;
  height: 20px;
  margin: 1px 0 0 -5px;
  padding-left: 5px;
  background: #2a0505;
  font-size: 13px;
}

.period {
  height: 17px;
  line-height: 17px;
  padding: 0 5px 0 13px;
  background: #1c0000;
  border: 1px solid #500000;
}

.rank {
  display: grid;
  grid-template-columns: 55px 68px 52px 1fr;
  align-items: center;
  height: 22px;
  font-size: 14px;
  white-space: nowrap;
}

.code {
  color: #ffff80;
}

.rank-name {
  color: #ffff80;
  font-size: 15.500px;
}

.rank-name.st {
  padding-left: 9px;
  font-size: 14px;
}

.price {
  text-align: right;
}

.pct {
  text-align: right;
  padding-right: 1px;
}

.gene-arrows {
  position: absolute;
  left: -2px;
  top: -4px;
  pointer-events: none;
}

/* floating window */
.win {
  position: absolute;
  left: 464px;
  top: 388px;
  width: 563px;
  height: 390px;
  display: flex;
  flex-direction: column;
  background: #0a4fdc;
  border-radius: 6px 6px 0 0;
  overflow: hidden;
}

.win-title {
  position: relative;
  display: flex;
  align-items: center;
  height: 28px;
  flex: none;
  padding-left: 6px;
  background: linear-gradient(#2a86f0, #1068e4 25%, #0b5fdc 70%, #1a78ec);
  color: #fff;
  font-size: 14px;
  font-weight: 700;
  white-space: nowrap;
}

.win-icon {
  width: 15px;
  height: 11px;
  background: #fff;
  border-top: 2px solid #a0c4f0;
  box-sizing: border-box;
  flex: none;
}

.win-name {
  margin-left: 5px;
  width: 306px;
  word-spacing: 2px;
  letter-spacing: 0.6px;
}

.btns {
  position: absolute;
  right: 4px;
  top: 4px;
  display: flex;
  gap: 3px;
}

.btn {
  display: flex;
  align-items: center;
  justify-content: center;
  width: 20px;
  height: 20px;
  box-sizing: border-box;
  border: 1px solid #d8e4f8;
  border-radius: 3px;
  background: linear-gradient(135deg, #6f9df2, #2c62d8);
}

.btn.close {
  background: linear-gradient(135deg, #f08a60, #d8441c);
}

.min {
  width: 7px;
  height: 3px;
  background: #fff;
  margin-top: 9px;
  margin-right: 3px;
}

.max {
  width: 11px;
  height: 10px;
  box-sizing: border-box;
  border: 1px solid #fff;
  border-top-width: 3px;
}

.win-body {
  position: relative;
  flex: 1;
  margin-left: 3px;
  background: #000;
}

.win-chart {
  display: block;
}

.win-head {
  font-size: 12px;
  dominant-baseline: central;
}

.replay {
  fill: #a8a8a8;
  font-size: 12px;
  text-anchor: middle;
  dominant-baseline: central;
}

.blast {
  fill: #e020f0;
  font-size: 28px;
  text-anchor: middle;
  dominant-baseline: central;
}

.win-left {
  font-size: 12.5px;
  text-anchor: end;
  dominant-baseline: central;
}

.win-right {
  font-size: 13px;
  dominant-baseline: central;
}

.win-time {
  fill: #ff3232;
  font-size: 12.5px;
  text-anchor: middle;
  dominant-baseline: central;
}

.fs-head {
  font-size: 12px;
  dominant-baseline: central;
}

.fs-tabs {
  position: absolute;
  left: 2px;
  top: 342px;
  display: grid;
  grid-template-columns: 68px 50px 48px 67px;
  height: 16px;
  font-size: 12px;
  line-height: 16px;
  text-align: center;
}

.fs-tabs span {
  background: #a0a0a0;
  color: #202020;
  clip-path: polygon(0 0, 100% 0, 92% 100%, 8% 100%);
}

.fs-tabs .on {
  background: #800000;
  color: #fff;
}
</style>
